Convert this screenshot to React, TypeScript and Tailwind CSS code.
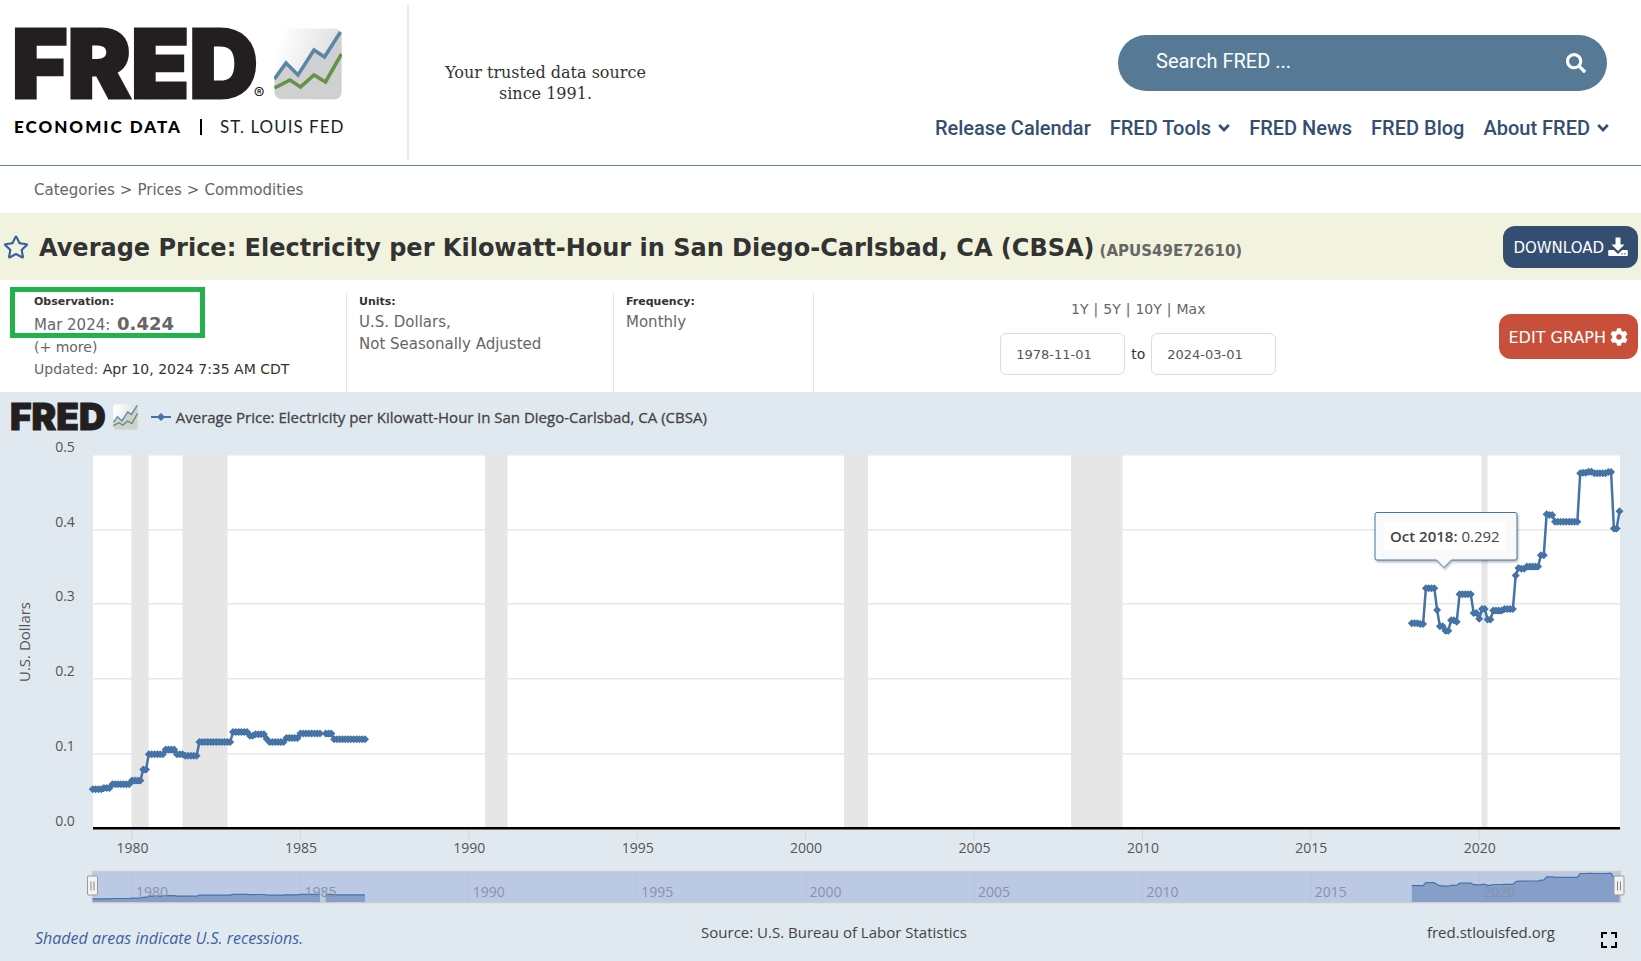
import { FaCog, FaRegStar, FaSearch } from "react-icons/fa";

type Run = [count: number, value: number | null];

const earlyRuns: Run[] = [
  [4, 0.0518], [3, 0.0535], [7, 0.0585], [4, 0.0634], [2, 0.0785], [6, 0.0986],
  [4, 0.1049], [3, 0.0986], [5, 0.0968], [12, 0.1151], [6, 0.1285], [2, 0.1236],
  [4, 0.1254], [1, 0.119], [6, 0.1151], [5, 0.1205], [8, 0.1267], [1, null],
  [3, 0.1267], [12, 0.1187],
];

const lateRuns: Run[] = [
  [3, 0.274], [2, 0.273], [4, 0.321], [1, 0.292], [2, 0.27], [2, 0.264], [2, 0.278],
  [1, 0.276], [5, 0.313], [2, 0.288], [1, 0.28], [2, 0.293], [2, 0.279], [4, 0.291],
  [4, 0.293], [1, 0.338], [1, 0.348], [2, 0.347], [5, 0.35], [2, 0.365], [1, 0.42],
  [2, 0.419], [9, 0.41], [1, 0.475], [2, 0.4755], [2, 0.477], [5, 0.475], [2, 0.4765],
  [2, 0.401], [1, 0.424],
];

const TOP = 440;
const xAt = (year: number) => 132 + (year - 1980) * 33.68;
const yAt = (value: number) => 828 - TOP - value * 747;
const navY = (value: number) => 902 - TOP - value * 60;

function expand(runs: Run[], startYear: number) {
  const segments: { x: number; v: number }[][] = [[]];
  let month = 0;
  for (const [count, value] of runs) {
    for (let i = 0; i < count; i++, month++) {
      if (value === null) segments.push([]);
      else segments[segments.length - 1].push({ x: xAt(startYear + month / 12), v: value });
    }
  }
  return segments;
}

const segments = [...expand(earlyRuns, 1978 + 10 / 12), ...expand(lateRuns, 2018)];
const recessions = [[131.5, 148.5], [182.5, 227.5], [485, 507.5], [844, 868], [1071, 1122.5], [1481.5, 1487.5]];
const years = [1980, 1985, 1990, 1995, 2000, 2005, 2010, 2015, 2020];
const levels = ["0.0", "0.1", "0.2", "0.3", "0.4", "0.5"];

function TrendIcon({ className, id }: { className: string; id: string }) {
  return (
    <svg viewBox="0 0 68 72" className={className} aria-hidden="true">
      <defs>
        <linearGradient id={id} x1="0" y1="0" x2="1" y2="0.3">
          <stop offset="0.1" stopColor="#ffffff" />
          <stop offset="1" stopColor="#dcdddd" />
        </linearGradient>
      </defs>
      <rect x="0.5" y="0.5" width="67" height="71" rx="7" fill={`url(#${id})`} />
      <path d="M0.5 51 12 36 24 47 39 23 50 29 67.500 4V64a7 7 0 0 1-7 7H7.500a7 7 0 0 1-7-7Z" fill="#cfd0d2" />
      <path d="M0.500 51 12 35 24 47 40 22 50.500 29 66.500 4" fill="none" stroke="#5b87a5" strokeWidth="3.600" />
      <path d="M0.500 60 16 52 26.500 59 40 47 51.500 54 67.500 26" fill="none" stroke="#669248" strokeWidth="3.600" />
    </svg>
  );
}

function DownloadIcon() {
  return (
    <svg viewBox="0 0 20 20" className="h-5 w-5" fill="currentColor" aria-hidden="true">
      <path d="M7.500 0.500h5v7h4L10 14 3.500 7.500h4Z" />
      <path d="M1 13h4.800L10 17l4.200-4H19a.8.8 0 0 1 .8.800v4.400a.8.8 0 0 1-.8.800H1a.8.8 0 0 1-.8-.8v-4.400A.8.8 0 0 1 1 13Zm12.500 3.200v1.300h1.300v-1.300Zm2.700 0v1.300h1.300v-1.300Z" fillRule="evenodd" />
    </svg>
  );
}

function Chevron() {
  return (
    <svg viewBox="0 0 12 12" className="h-3 w-3" aria-hidden="true">
      <path d="M1.200 3 6 8l4.800-5" fill="none" stroke="currentColor" strokeWidth="2.600" />
    </svg>
  );
}

function Chart() {
  return (
    <svg viewBox="0 0 1641 470" className="block w-full font-['Open_Sans',sans-serif]" role="img" aria-label="Average Price: Electricity per Kilowatt-Hour in San Diego-Carlsbad, CA (CBSA)">
      <rect x="93" y="14" width="1527" height="374" fill="#ffffff" />
      {levels.map((label, i) => (
        <g key={label}>
          <rect x="93" y={Math.floor(yAt(i / 10))} width="1527" height="1.500" fill="#e8e8e8" />
          <text x="65" y={Math.floor(yAt(i / 10)) - 2} textAnchor="middle" fontSize="14" fill="#555555">{label}</text>
        </g>
      ))}
      {recessions.map(([a, b]) => (
        <rect key={a} x={a} y="15" width={b - a} height="372" fill="#e6e6e6" />
      ))}
      <rect x="93" y="387" width="1527" height="2.500" fill="#000000" />
      {years.map((year) => (
        <g key={year}>
          <rect x={xAt(year) - 0.500} y="390" width="1" height="10" fill="#ccd6eb" />
          <text x={xAt(year) + 0.500} y="413" textAnchor="middle" fontSize="14" fill="#555555">{year}</text>
        </g>
      ))}
      <text transform="translate(30 202) rotate(-90)" textAnchor="middle" fontSize="15" fill="#555555">U.S. Dollars</text>

      {segments.map((points, i) => (
        <g key={i}>
          <path d={points.map((p, j) => `${j ? "L" : "M"}${p.x.toFixed(1)} ${yAt(p.v).toFixed(1)}`).join("")} fill="none" stroke="#4572a7" strokeWidth="2.500" strokeLinejoin="round" />
          <path d={points.map((p) => `M${(p.x - 4).toFixed(1)} ${yAt(p.v).toFixed(1)}l4-4 4 4-4 4Z`).join("")} fill="#4572a7" />
        </g>
      ))}

      <rect x="92.500" y="431.500" width="1528" height="31" fill="#bbc9e5" stroke="#cccccc" strokeWidth="1.500" />
      {years.map((year) => (
        <rect key={year} x={xAt(year) - 0.500} y="432" width="1" height="30" fill="#b7c4de" />
      ))}
      {segments.map((points, i) => {
        const line = points.map((p) => `${p.x.toFixed(1)} ${navY(p.v).toFixed(1)}`).join("L");
        return (
          <g key={i}>
            <path d={`M${line}V462H${points[0].x.toFixed(1)}Z`} fill="#859fc9" />
            <path d={`M${line}`} fill="none" stroke="#4572a7" strokeWidth="1.200" />
          </g>
        );
      })}
      {years.map((year) => (
        <text key={year} x={xAt(year) + 20} y="457" textAnchor="middle" fontSize="14" fill="#8a92a8">{year}</text>
      ))}
      {[92.500, 1619].map((x) => (
        <g key={x} transform={`translate(${x} 446)`}>
          <rect x="-5" y="-10" width="10" height="19" rx="1" fill="#f2f2f2" stroke="#999999" />
          <path d="M-1.500-4.500v9M1.500-4.500v9" stroke="#888888" fill="none" />
        </g>
      ))}

      <g>
        <path d="M1377 72.500H1515a2 2 0 0 1 2 2V118a2 2 0 0 1-2 2H1451.500L1444 127.500 1436.500 120H1377a2 2 0 0 1-2-2V74.500a2 2 0 0 1 2-2Z" fill="#f9f9f9" stroke="#4572a7" className="drop-shadow-[1px_2px_1px_rgba(0,0,0,0.25)]" />
        <rect x="1384" y="82" width="121" height="28" fill="#ffffff" />
        <text x="1390" y="102" fontSize="15" fill="#444444"><tspan fontWeight="600">Oct 2018:</tspan> 0.292</text>
      </g>
    </svg>
  );
}

const navLinks = [
  { label: "Release Calendar" },
  { label: "FRED Tools", menu: true },
  { label: "FRED News" },
  { label: "FRED Blog" },
  { label: "About FRED", menu: true },
];

export default function App() {
  return (
    <div className="bg-white font-['DejaVu_Sans',sans-serif] text-[#333333]">
      <header className="flex border-b border-[#5b87a0]">
        <a href="#home" className="block w-[407px] shrink-0 pt-7 pl-[14px] text-[#231f20]">
          <span className="-ml-[2px] flex items-start">
            <span className="font-['Inter',sans-serif] text-[95px] leading-[72px] font-black [-webkit-text-stroke:3px_#231f20]">FRED</span>
            <span className="-ml-1 mt-[57px] font-['Inter',sans-serif] text-base leading-4">®</span>
            <TrendIcon id="trend-large" className="ml-[9px] h-[72px] w-[68px]" />
          </span>
          <span className="mt-[14px] flex items-center gap-[18px] text-[17px] leading-6 text-black">
            <span className="font-['Lato',sans-serif] font-black tracking-[2px]">ECONOMIC DATA</span>
            <span className="h-4 w-[2px] bg-black" />
            <span className="font-['Lato',sans-serif] tracking-[1px] text-[#231f20]">ST. LOUIS FED</span>
          </span>
        </a>
        <div className="my-[5px] w-[2px] shrink-0 bg-[#e8e8e8]" />
        <p className="w-[273px] shrink-0 pt-[62px] text-center font-['DejaVu_Serif',serif] text-base leading-[21px]">
          Your trusted data source<br />since 1991.
        </p>
        <div className="flex min-w-0 flex-1 flex-col items-end pt-[35px] pr-8 pb-6">
          <form className="mr-[2px] flex h-14 w-[489px] items-center rounded-full bg-[#567a96] pr-[21px] pl-[38px] font-['Roboto',sans-serif] text-white">
            <input aria-label="Search FRED" placeholder="Search FRED ..." className="min-w-0 flex-1 bg-transparent pb-1 text-xl text-white outline-none placeholder:text-white" />
            <button type="button" aria-label="Search"><FaSearch className="h-5 w-5" /></button>
          </form>
          <nav className="mt-6 flex gap-[19px] font-['Roboto',sans-serif] text-xl leading-[26px] font-medium whitespace-nowrap text-[#344e72]">
            {navLinks.map((item) => (
              <a key={item.label} href="#nav" className="flex items-center gap-[7px]">
                {item.label}
                {item.menu && <Chevron />}
              </a>
            ))}
          </nav>
        </div>
      </header>

      <nav aria-label="Breadcrumb" className="flex h-[47px] items-center gap-[5px] pt-[2px] pl-[34px] text-[15px] text-[#666666]">
        <a href="#categories">Categories</a><span>&gt;</span>
        <a href="#prices">Prices</a><span>&gt;</span>
        <a href="#commodities">Commodities</a>
      </nav>

      <div className="flex h-[67px] items-center bg-[#f2f3df] pr-[3px] pl-[3px]">
        <button type="button" aria-label="Save to favorites" className="text-[#3a62a0]"><FaRegStar className="h-[26px] w-[26px]" /></button>
        <h1 className="ml-[10px] flex-1 pt-[2px] text-2xl font-bold whitespace-nowrap">
          Average Price: Electricity per Kilowatt-Hour in San Diego-Carlsbad, CA (CBSA)
          <span className="ml-[5px] text-[15px] text-[#666666]">(APUS49E72610)</span>
        </h1>
        <button type="button" className="flex h-[42px] items-center gap-1 rounded-xl bg-[#344e72] px-[10px] text-[15px] text-white">
          <span className="pt-[3px]">DOWNLOAD</span> <DownloadIcon />
        </button>
      </div>

      <section className="flex h-28 pt-[13px] text-[15px] leading-[22px] text-[#666666]">
        <div className="relative w-[347px] shrink-0 border-r border-[#dfe6ee] pl-[34px]">
          <h2 className="pb-px text-[11px] leading-[17px] font-bold text-[#333333]">Observation:</h2>
          <p className="pt-[2px]">Mar 2024: <strong className="ml-[2px] text-lg leading-[22px]">0.424</strong></p>
          <p className="text-sm leading-[22px]"><a href="#more">(+ more)</a></p>
          <p className="text-sm leading-[22px]">Updated: <span className="text-[#333333]">Apr 10, 2024 7:35 AM CDT</span></p>
          <div className="absolute top-[-6px] left-[10px] h-[51px] w-[195px] border-5 border-[#22b14c]" />
        </div>
        <div className="w-[267px] shrink-0 border-r border-[#dfe6ee] pl-3">
          <h2 className="pb-px text-[11px] leading-[17px] font-bold text-[#333333]">Units:</h2>
          <p>U.S. Dollars,<br />Not Seasonally Adjusted</p>
        </div>
        <div className="w-[200px] shrink-0 border-r border-[#dfe6ee] pl-3">
          <h2 className="pb-px text-[11px] leading-[17px] font-bold text-[#333333]">Frequency:</h2>
          <p>Monthly</p>
        </div>
        <div className="flex flex-1 flex-col items-center pt-1 pr-9">
          <div className="flex gap-[5px] text-sm leading-6">
            <a href="#1y">1Y</a><span>|</span><a href="#5y">5Y</a><span>|</span><a href="#10y">10Y</a><span>|</span><a href="#max">Max</a>
          </div>
          <div className="mt-3 flex items-center gap-[6px]">
            <input aria-label="Start date" defaultValue="1978-11-01" className="h-[42px] w-[125px] rounded-md border border-[#dcdde4] px-[15px] text-[13px] text-[#555555]" />
            <span className="text-sm text-[#333333]">to</span>
            <input aria-label="End date" defaultValue="2024-03-01" className="h-[42px] w-[125px] rounded-md border border-[#dcdde4] px-[15px] text-[13px] text-[#555555]" />
          </div>
        </div>
        <button type="button" className="mt-[21px] mr-[3px] flex h-[45px] items-center gap-1 rounded-xl bg-[#c8503a] px-[10px] text-base text-white">
          <span className="pt-[2px]">EDIT GRAPH</span> <FaCog className="h-[18px] w-[18px]" />
        </button>
      </section>

      <section className="bg-[#e1e9f0] font-['Open_Sans',sans-serif] text-[#444444]">
        <div className="flex h-12 items-center pt-[2px] pl-[10px]">
          <span className="font-['Inter',sans-serif] text-[37px] leading-[26px] font-black text-[#231f20] [-webkit-text-stroke:1px_#231f20]">FRED</span>
          <TrendIcon id="trend-small" className="ml-[6px] h-[26px] w-[27px]" />
          <svg viewBox="0 0 20 10" className="ml-3 h-[10px] w-5" aria-hidden="true">
            <path d="M0 4h20v2H0ZM6 5l4-4 4 4-4 4Z" fill="#4572a7" />
          </svg>
          <span className="ml-[5px] text-[15px] font-medium [-webkit-text-stroke:0.3px_#444444]">Average Price: Electricity per Kilowatt-Hour in San Diego-Carlsbad, CA (CBSA)</span>
        </div>
        <Chart />
        <footer className="grid h-[51px] grid-cols-3 pr-6 pl-[35px] text-[15px]">
          <p className="pt-4 text-base text-[#40609f] italic">Shaded areas indicate U.S. recessions.</p>
          <p className="pt-[11px] pl-4 text-center">Source: U.S. Bureau of Labor Statistics</p>
          <div className="flex justify-end gap-[46px] pt-[11px]">
            <a href="#site">fred.stlouisfed.org</a>
            <button type="button" aria-label="Full screen" className="mt-[11px] h-4 w-4">
              <svg viewBox="0 0 16 16" className="h-4 w-4" aria-hidden="true">
                <path d="M1 6V1h5M10 1h5v5M15 10v5h-5M6 15H1v-5" fill="none" stroke="#000000" strokeWidth="2" />
              </svg>
            </button>
          </div>
        </footer>
      </section>
    </div>
  );
}
